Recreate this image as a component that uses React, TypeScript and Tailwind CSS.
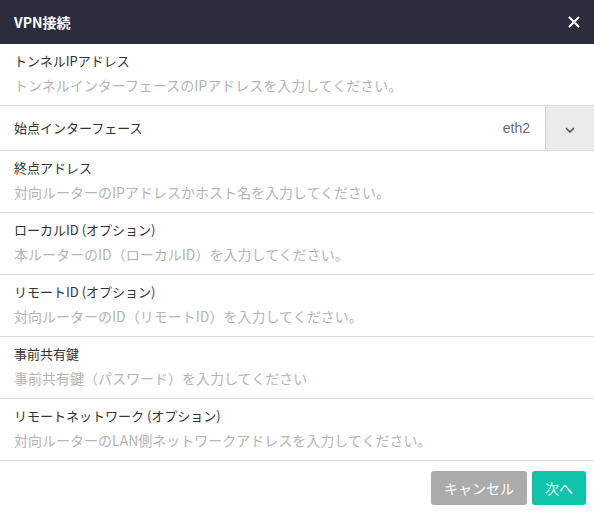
const fields = [
  { label: "トンネルIPアドレス", placeholder: "トンネルインターフェースのIPアドレスを入力してください。" },
  { label: "終点アドレス", placeholder: "対向ルーターのIPアドレスかホスト名を入力してください。" },
  { label: "ローカルID (オプション)", placeholder: "本ルーターのID（ローカルID）を入力してください。" },
  { label: "リモートID (オプション)", placeholder: "対向ルーターのID（リモートID）を入力してください。" },
  { label: "事前共有鍵", placeholder: "事前共有鍵（パスワード）を入力してください" },
  { label: "リモートネットワーク (オプション)", placeholder: "対向ルーターのLAN側ネットワークアドレスを入力してください。" },
];

function Field({ label, placeholder }: { label: string; placeholder: string }) {
  return (
    <label className="flex flex-col border-b border-[#dcdcdc] h-[62px] px-[14px] pt-[7px]">
      <span className="text-[13px] leading-[20px] text-[#333]">{label}</span>
      <input
        className="mt-[4px] text-[14px] leading-[20px] text-[#333] placeholder:text-[#b5b5b5] outline-none bg-transparent"
        placeholder={placeholder}
      />
    </label>
  );
}

export default function App() {
  return (
    <div
      className="w-[594px] h-[514px] bg-white flex flex-col"
      style={{ fontFamily: '"Noto Sans CJK JP", "Noto Sans", sans-serif' }}
    >
      {/* header */}
      <div className="h-[44px] bg-[#2b2c3e] flex items-center justify-between px-[14px] shrink-0">
        <span className="text-white text-[14px] font-bold">VPN接続</span>
        <button type="button" className="text-white w-[12px] h-[12px] flex items-center justify-center">
          <svg viewBox="0 0 12 12" className="w-[12px] h-[12px]" stroke="currentColor" strokeWidth="2">
            <path d="M1 1l10 10M11 1L1 11" />
          </svg>
        </button>
      </div>

      <Field {...fields[0]} />

      {/* source interface select */}
      <div className="flex items-stretch border-b border-[#dcdcdc] h-[45px]">
        <span className="flex-1 flex items-center px-[14px] text-[13px] text-[#333]">始点インターフェース</span>
        <span
          className="flex items-center pr-[15px] text-[14px] text-[#666c80]"
          style={{ fontFamily: '"Liberation Sans", Arial, sans-serif' }}
        >
          eth2
        </span>
        <div className="w-[49px] bg-[#ebebeb] border-l border-[#d0d0d0] flex items-center justify-center">
          <svg viewBox="0 0 10 6" className="w-[10px] h-[6px] mt-[4px]" fill="none" stroke="#555" strokeWidth="1.6">
            <path d="M1 1l4 4 4-4" />
          </svg>
        </div>
      </div>

      {fields.slice(1).map((f) => (
        <Field key={f.label} {...f} />
      ))}

      {/* footer */}
      <div className="flex justify-end gap-[5px] pt-[10px] pr-[8px]">
        <button type="button" className="h-[34px] w-[96px] rounded-[3px] bg-[#ababab] text-white text-[14px]">
          キャンセル
        </button>
        <button type="button" className="h-[34px] w-[54px] rounded-[3px] bg-[#0fc3ab] text-white text-[14px]">
          次へ
        </button>
      </div>
    </div>
  );
}
